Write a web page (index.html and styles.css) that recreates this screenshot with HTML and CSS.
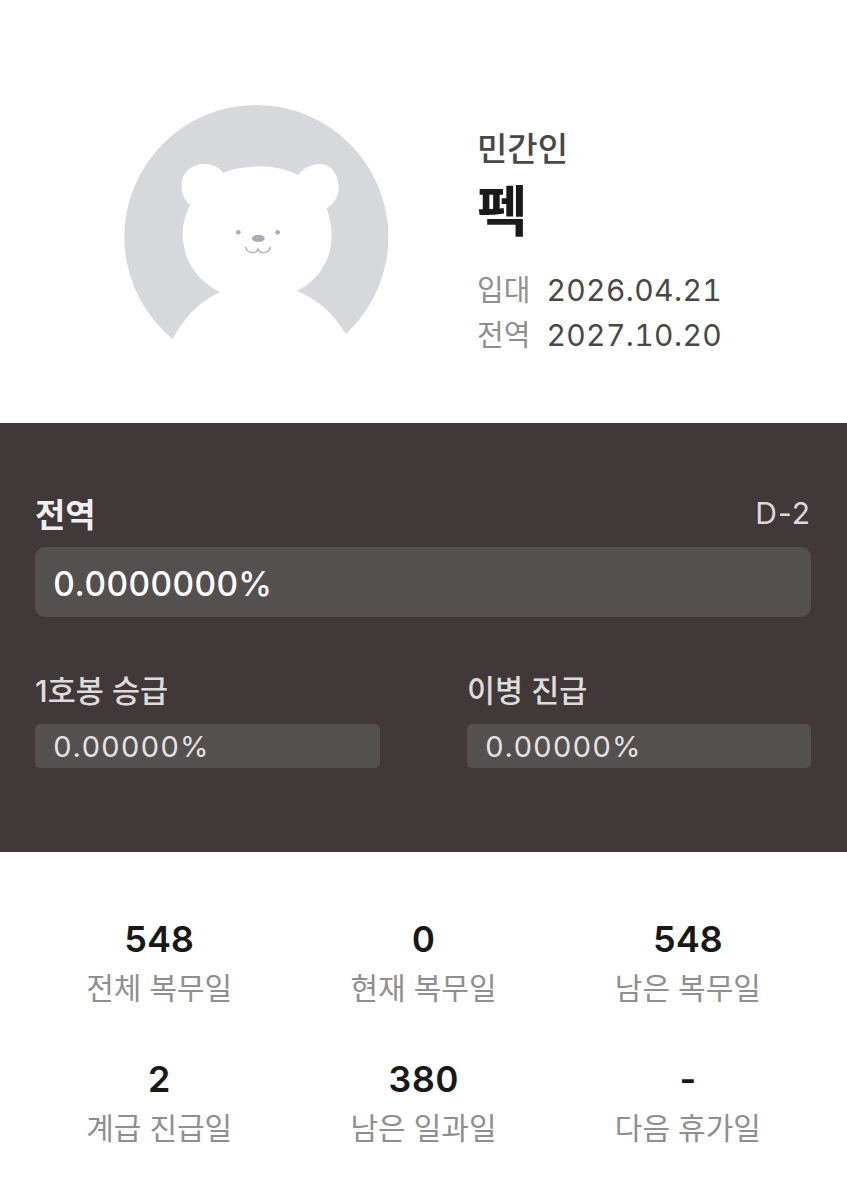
FILE: index.html
```html
<!DOCTYPE html>
<html lang="ko">
<head>
    <meta charset="UTF-8">
    <meta name="viewport" content="width=device-width, initial-scale=1.0">
    <title>전역일 계산기</title>
    <link rel="stylesheet" href="styles.css">
</head>
<body>
    <section class="profile">
        <svg class="avatar" width="300" height="270" viewBox="0 0 900 810">
            <circle cx="439" cy="441" r="396" fill="#d6d8dc"/>
            <path fill="#fff" d="M330 607C270 575 218 520 218 430C218 400 228 370 240 345C222 330 215 310 215 285C215 245 250 222 280 222C305 222 328 232 340 248C380 232 420 229 450 229C490 229 530 238 565 255C578 235 605 222 630 222C665 222 686 255 686 295C686 320 672 342 650 355C660 385 665 410 665 435C665 515 620 575 560 603C620 625 670 670 708 733L860 733V860H40V748H188C220 685 270 632 330 607Z"/>
            <circle cx="385" cy="427" r="7" fill="#a9adb5"/>
            <circle cx="503" cy="427" r="7" fill="#a9adb5"/>
            <ellipse cx="445" cy="445" rx="19" ry="11" fill="#a9adb5"/>
            <path fill="none" stroke="#a9adb5" stroke-width="4" stroke-linecap="round" d="M407 472C412 490 438 494 444 477C450 494 476 490 481 472"/>
        </svg>
        <div class="profile-info">
            <div class="rank">민간인</div>
            <div class="name">펙</div>
            <div class="date-row date-first"><span class="date-label">입대</span><span class="date-value">2026.04.21</span></div>
            <div class="date-row"><span class="date-label">전역</span><span class="date-value">2027.10.20</span></div>
        </div>
    </section>

    <section class="progress">
        <div class="progress-head">
            <span class="progress-title">전역</span>
            <span class="progress-dday">D-2</span>
        </div>
        <div class="bar bar-main">0.0000000%</div>
        <div class="progress-sub">
            <div class="sub-item">
                <div class="sub-title">1호봉 승급</div>
                <div class="bar bar-small">0.00000%</div>
            </div>
            <div class="sub-item">
                <div class="sub-title">이병 진급</div>
                <div class="bar bar-small">0.00000%</div>
            </div>
        </div>
    </section>

    <section class="stats">
        <div class="stat"><div class="stat-num">548</div><div class="stat-label">전체 복무일</div></div>
        <div class="stat"><div class="stat-num">0</div><div class="stat-label">현재 복무일</div></div>
        <div class="stat"><div class="stat-num">548</div><div class="stat-label">남은 복무일</div></div>
        <div class="stat"><div class="stat-num">2</div><div class="stat-label">계급 진급일</div></div>
        <div class="stat"><div class="stat-num">380</div><div class="stat-label">남은 일과일</div></div>
        <div class="stat"><div class="stat-num">-</div><div class="stat-label">다음 휴가일</div></div>
    </section>
</body>
</html>
```

FILE: styles.css
```css
body {
    margin: 0;
    background-color: #fff;
    font-family: Inter, "Noto Sans CJK KR", sans-serif;
    font-variant-numeric: tabular-nums;
}
.profile {
    display: flex;
    height: 423px;
}
.avatar {
    flex: none;
    margin: 90px 0 0 110px;
}
.profile-info {
    margin-left: 67px;
    padding-top: 129px;
}
.rank {
    font-size: 33px;
    line-height: 40px;
    font-weight: 500;
    color: #484848;
}
.name {
    margin-top: 12px;
    font-size: 55px;
    line-height: 60px;
    font-weight: 700;
    color: #1a1a1a;
}
.date-row {
    display: flex;
    gap: 16px;
    font-size: 29px;
    line-height: 45px;
}
.date-first {
    margin-top: 27px;
}
.date-label {
    color: #8f8f8f;
}
.date-value {
    font-size: 30px;
    color: #484848;
    letter-spacing: 0.4px;
}
.progress {
    height: 429px;
    box-sizing: border-box;
    padding: 68px 36px 0 35px;
    background-color: #413839;
}
.progress-head {
    display: flex;
    justify-content: space-between;
    align-items: center;
    height: 44px;
}
.progress-title {
    font-size: 33px;
    font-weight: 700;
    color: #f0eeee;
}
.progress-dday {
    font-size: 30px;
    font-variant-numeric: proportional-nums;
    letter-spacing: 1px;
    color: #dcd9d9;
}
.bar {
    background-color: #555050;
    box-sizing: border-box;
    padding-left: 18px;
}
.bar-main {
    margin-top: 12px;
    height: 70px;
    border-radius: 10px;
    font-size: 34px;
    line-height: 73px;
    font-weight: 500;
    color: #fff;
}
.progress-sub {
    display: grid;
    grid-template-columns: 345px 344px;
    justify-content: space-between;
    margin-top: 51px;
}
.sub-title {
    height: 56px;
    font-size: 30.5px;
    font-variant-numeric: proportional-nums;
    line-height: 45px;
    font-weight: 500;
    color: #dedbdb;
}
.bar-small {
    height: 44px;
    border-radius: 5px;
    font-size: 29px;
    line-height: 46px;
    letter-spacing: 0.9px;
    color: #e4e1e1;
}
.stats {
    display: grid;
    grid-template-columns: repeat(3, 1fr);
    row-gap: 42px;
    padding: 64px 27px 0;
    text-align: center;
}
.stat-num {
    font-size: 36px;
    line-height: 46px;
    font-weight: 600;
    color: #181818;
}
.stat-label {
    font-size: 30px;
    line-height: 52px;
    color: #8f8f8f;
}
```
